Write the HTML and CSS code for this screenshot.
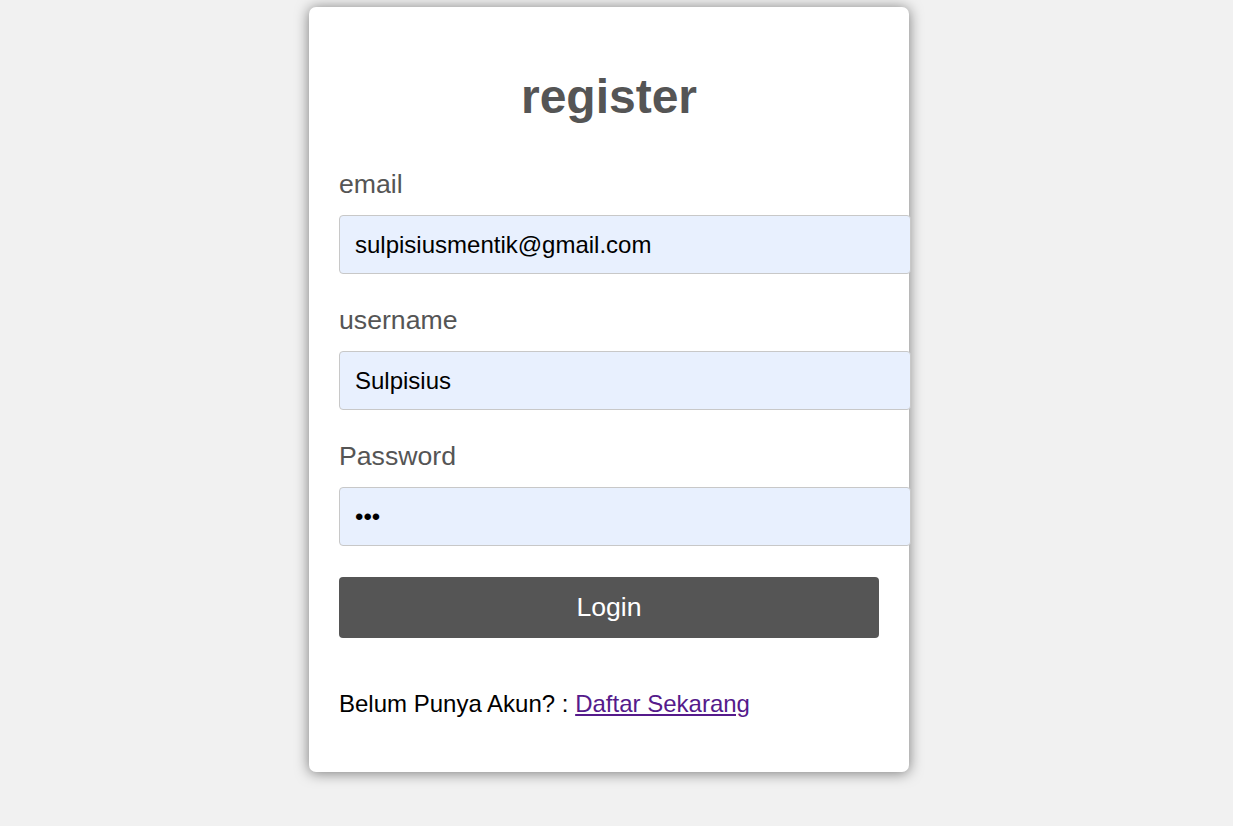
FILE: index.html
```html
<!DOCTYPE html>
<html lang="id">
<head>
<meta charset="utf-8">
<title>register</title>
<link rel="stylesheet" href="styles.css">
</head>
<body>
<div class="page">
  <form class="card" onsubmit="return false">
    <h1 class="title">register</h1>
    <label class="label" for="email">email</label>
    <input class="field" id="email" type="text" value="sulpisiusmentik@gmail.com">
    <label class="label" for="username">username</label>
    <input class="field" id="username" type="text" value="Sulpisius">
    <label class="label" for="password">Password</label>
    <input class="field" id="password" type="password" value="abc">
    <button class="btn" type="submit">Login</button>
    <p class="note">Belum Punya Akun? : <a class="link" href="#">Daftar Sekarang</a></p>
  </form>
</div>
</body>
</html>
```
FILE: styles.css
```css
html, body {
  margin: 0;
  padding: 0;
  background: #f1f1f1;
  font-family: "Liberation Sans", Arial, sans-serif;
}
.page {
  display: flex;
  justify-content: center;
  padding: 7px 15px 0 0;
  min-height: 819px;
  box-sizing: border-box;
}
.card {
  width: 600px;
  height: 765px;
  box-sizing: border-box;
  background: #fff;
  border-radius: 7px;
  box-shadow: 0 1px 14px rgba(0, 0, 0, 0.5);
  padding: 30px 30px 0 30px;
  display: flex;
  flex-direction: column;
}
.title {
  margin: 32px 0 43px 0;
  font-size: 48px;
  line-height: 56px;
  font-weight: bold;
  color: #555;
  text-align: center;
}
.label {
  display: block;
  font-size: 26.67px;
  line-height: 32px;
  color: #555;
  margin-bottom: 15px;
}
.field {
  display: block;
  width: 100%;
  height: 57px;
  box-sizing: content-box;
  padding: 0 15px;
  margin: 0 0 30px 0;
  border: 1px solid #c8c8c8;
  border-radius: 4px;
  background: #e8f0fe;
  font-family: "Liberation Sans", Arial, sans-serif;
  font-size: 24px;
  color: #000;
  outline: none;
}
#password {
  margin-bottom: 31px;
}
.btn {
  display: block;
  width: 100%;
  height: 61px;
  border: none;
  border-radius: 4px;
  background: #555;
  color: #fff;
  font-family: "Liberation Sans", Arial, sans-serif;
  font-size: 26.67px;
  padding: 0;
  margin: 0;
}
.note {
  margin: 52px 0 0 0;
  font-size: 24px;
  line-height: 28px;
  color: #000;
}
.link {
  color: #551a8b;
}
```
